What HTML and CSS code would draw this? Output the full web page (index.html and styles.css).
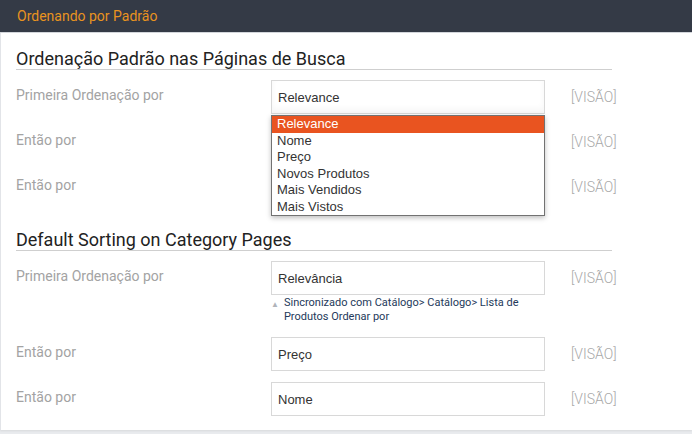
FILE: index.html
```html
<!DOCTYPE html>
<html lang="pt">
<head>
  <meta charset="UTF-8">
  <meta name="viewport" content="width=device-width, initial-scale=1.0">
  <title>Ordenando por Padrão</title>
  <link rel="stylesheet" href="styles.css">
</head>
<body>
  <div class="panel">
    <div class="panel-head">Ordenando por Padrão</div>
    <div class="panel-body">
      <h2 class="section-title">Ordenação Padrão nas Páginas de Busca</h2>
      <div class="row">
        <div class="label">Primeira Ordenação por</div>
        <div class="field">
          <div class="select focused">Relevance</div>
          <ul class="dropdown">
            <li class="active">Relevance</li>
            <li>Nome</li>
            <li>Preço</li>
            <li>Novos Produtos</li>
            <li>Mais Vendidos</li>
            <li>Mais Vistos</li>
          </ul>
        </div>
        <div class="scope">[VISÃO]</div>
      </div>
      <div class="row">
        <div class="label">Então por</div>
        <div class="field"><div class="select">Nome</div></div>
        <div class="scope">[VISÃO]</div>
      </div>
      <div class="row last">
        <div class="label">Então por</div>
        <div class="field"><div class="select">Preço</div></div>
        <div class="scope">[VISÃO]</div>
      </div>

      <h2 class="section-title">Default Sorting on Category Pages</h2>
      <div class="row">
        <div class="label">Primeira Ordenação por</div>
        <div class="field">
          <div class="select">Relevância</div>
          <div class="note"><span class="note-arrow">&#9650;</span><span>Sincronizado com Catálogo&gt; Catálogo&gt; Lista de Produtos Ordenar por</span></div>
        </div>
        <div class="scope">[VISÃO]</div>
      </div>
      <div class="row">
        <div class="label">Então por</div>
        <div class="field"><div class="select">Preço</div></div>
        <div class="scope">[VISÃO]</div>
      </div>
      <div class="row">
        <div class="label">Então por</div>
        <div class="field"><div class="select">Nome</div></div>
        <div class="scope">[VISÃO]</div>
      </div>
    </div>
  </div>
</body>
</html>
```

FILE: styles.css
```css
* {
  box-sizing: border-box;
  margin: 0;
  padding: 0;
}
body {
  background-color: #e9ebee;
  font-family: Roboto, 'Liberation Sans', sans-serif;
  height: 434px;
  overflow: hidden;
}
.panel {
  background-color: #fff;
  height: 430px;
  box-shadow: 0 1px 2px rgba(0,0,0,0.08);
}
.panel-head {
  background-color: #343a46;
  color: #e9931f;
  font-size: 14px;
  height: 33px;
  line-height: 33px;
  padding-left: 17px;
  border-bottom: 1px solid #d3d6db;
}
.panel-body {
  border-left: 1px solid #e2e4e8;
  height: 397px;
  padding: 16px 0 0 15px;
}
.section-title {
  font-size: 18px;
  font-weight: 400;
  color: #222;
  line-height: 20px;
  width: 596px;
  border-bottom: 1px solid #cfcfcf;
  margin-bottom: 10px;
}
.row {
  display: flex;
  align-items: flex-start;
  margin-bottom: 11px;
}
.row.last {
  margin-bottom: 26px;
}
.label {
  width: 255px;
  font-size: 14px;
  color: #a3a3a3;
  padding-top: 6px;
  line-height: 18px;
}
.field {
  width: 274px;
  position: relative;
}
.select {
  height: 34px;
  line-height: 34px;
  border: 1px solid #d8d8d8;
  padding-left: 6px;
  font-family: 'Liberation Sans', Arial, sans-serif;
  font-size: 13px;
  color: #333;
  background: #fff;
}
.select.focused {
  box-shadow: inset 0 -4px 6px rgba(0,0,0,0.04);
}
.dropdown {
  position: absolute;
  top: 35px;
  left: 0;
  width: 274px;
  list-style: none;
  background: #fff;
  border: 1px solid #727272;
  box-shadow: 0 2px 5px rgba(0,0,0,0.25);
  z-index: 5;
}
.dropdown li {
  height: 16.5px;
  line-height: 16.5px;
  padding-left: 5px;
  font-family: 'Liberation Sans', Arial, sans-serif;
  font-size: 13px;
  color: #333;
}
.dropdown li.active {
  background-color: #e95420;
  color: #fff;
}
.note {
  display: flex;
  gap: 5px;
  padding: 1px 20px 3px 0;
  font-size: 11px;
  line-height: 13.5px;
  color: #24395a;
}
.note-arrow {
  font-size: 8px;
  color: #b0b4ba;
  padding-top: 2px;
}
.scope {
  margin-left: 26px;
  padding-top: 8px;
  font-size: 14px;
  font-weight: 300;
  color: #a8a8a8;
  line-height: 18px;
}
```
